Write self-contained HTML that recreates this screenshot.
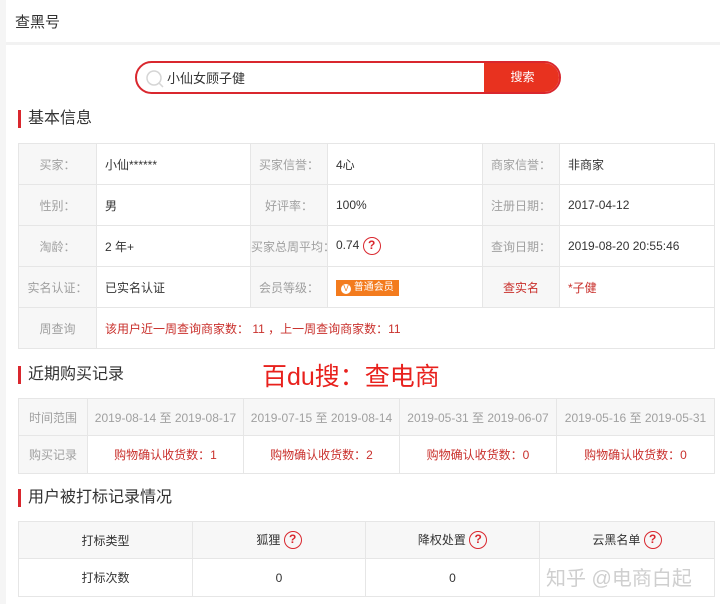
<!DOCTYPE html>
<html><head><meta charset="utf-8"><style>
*{margin:0;padding:0;box-sizing:border-box}
body{width:720px;height:604px;background:#fff;font-family:"Liberation Sans","Noto Sans CJK SC",sans-serif;position:relative;overflow:hidden;color:#333}
.strip{position:absolute;left:0;top:0;width:6px;height:604px;background:#f5f5f5}
.sep{position:absolute;left:6px;top:42px;width:714px;height:3px;background:#f2f2f2}
.a{position:absolute}
table{position:absolute;border-collapse:collapse;font-size:12px;table-layout:fixed}
td{border:1px solid #e6e6e6;padding:0;vertical-align:middle}
.l{background:#f7f7f7;color:#a0a0a0;text-align:center}
.v{padding-left:8px;color:#333}
.r{color:#c9302c}
.h{position:absolute;left:18px;font-size:16px;color:#333;border-left:3px solid #d9272e;padding-left:7px;line-height:18px}
.q{display:inline-block;width:18px;height:18px;border:1.5px solid #d9272e;border-radius:50%;color:#d9272e;font-size:12px;line-height:15px;text-align:center;vertical-align:middle;font-weight:bold}
</style></head><body>
<div class="strip"></div>
<div class="a" style="left:15px;top:11px;font-size:15px;color:#333">查黑号</div>
<div class="sep"></div>
<div class="a" style="left:135px;top:61px;width:426px;height:33px;border:2px solid #d9272e;border-radius:17px;overflow:hidden;background:#fff">
 <svg class="a" style="left:8px;top:6px" width="20" height="20"><circle cx="9" cy="9" r="7" fill="none" stroke="#d5d5d5" stroke-width="1.5"/><line x1="14" y1="14" x2="18" y2="18" stroke="#d5d5d5" stroke-width="1.5"/></svg>
 <div class="a" style="left:30px;top:5px;font-size:13px;color:#333">小仙女顾子健</div>
 <div class="a" style="left:347px;top:0;width:77px;height:29px;background:#e8321f;color:#fff;font-size:12px;text-align:center;line-height:29px">搜索</div>
</div>
<div class="h" style="top:110px">基本信息</div>
<table style="left:18px;top:143px;width:696px">
<colgroup><col style="width:78px"><col style="width:154px"><col style="width:77px"><col style="width:155px"><col style="width:77px"><col style="width:155px"></colgroup>
<tr style="height:41px"><td class="l">买家：</td><td class="v">小仙******</td><td class="l">买家信誉：</td><td class="v">4心</td><td class="l">商家信誉：</td><td class="v">非商家</td></tr>
<tr style="height:41px"><td class="l">性别：</td><td class="v">男</td><td class="l">好评率：</td><td class="v">100%</td><td class="l">注册日期：</td><td class="v">2017-04-12</td></tr>
<tr style="height:41px"><td class="l">淘龄：</td><td class="v">2 年+</td><td class="l" style="white-space:nowrap">买家总周平均：</td><td class="v">0.74 <span class="q">?</span></td><td class="l">查询日期：</td><td class="v">2019-08-20 20:55:46</td></tr>
<tr style="height:41px"><td class="l">实名认证：</td><td class="v">已实名认证</td><td class="l">会员等级：</td><td class="v"><span style="display:inline-block;background:#f37b1d;color:#fff;font-size:10px;padding:2px 5px;line-height:12px"><span style="display:inline-block;width:10px;height:10px;border-radius:50%;background:#fff;color:#f37b1d;font-size:8px;text-align:center;line-height:10px;vertical-align:-1px">V</span> 普通会员</span></td><td class="l r">查实名</td><td class="v r">*子健</td></tr>
<tr style="height:41px"><td class="l">周查询</td><td class="v r" colspan="5">该用户近一周查询商家数： 11 ，上一周查询商家数：11</td></tr>
</table>
<div class="h" style="top:366px">近期购买记录</div>
<div class="a" style="left:262px;top:357px;font-size:25px;color:#e8211d">百du搜：查电商</div>
<table style="left:18px;top:398px;width:696px;text-align:center">
<colgroup><col style="width:69px"><col style="width:156px"><col style="width:156px"><col style="width:157px"><col style="width:158px"></colgroup>
<tr style="height:37px;background:#f7f7f7;color:#a0a0a0"><td>时间范围</td><td>2019-08-14 至 2019-08-17</td><td>2019-07-15 至 2019-08-14</td><td>2019-05-31 至 2019-06-07</td><td>2019-05-16 至 2019-05-31</td></tr>
<tr style="height:38px"><td class="l">购买记录</td><td class="r">购物确认收货数：1</td><td class="r">购物确认收货数：2</td><td class="r">购物确认收货数：0</td><td class="r">购物确认收货数：0</td></tr>
</table>
<div class="h" style="top:489px">用户被打标记录情况</div>
<table style="left:18px;top:521px;width:696px;text-align:center">
<colgroup><col style="width:174px"><col style="width:173px"><col style="width:174px"><col style="width:175px"></colgroup>
<tr style="height:37px;background:#f7f7f7"><td>打标类型</td><td>狐狸 <span class="q">?</span></td><td>降权处置 <span class="q">?</span></td><td>云黑名单 <span class="q">?</span></td></tr>
<tr style="height:38px"><td>打标次数</td><td>0</td><td>0</td><td></td></tr>
</table>
<div class="a" style="left:546px;top:562px;font-size:20px;color:#cfcfcf">知乎 @电商白起</div>
</body></html>
